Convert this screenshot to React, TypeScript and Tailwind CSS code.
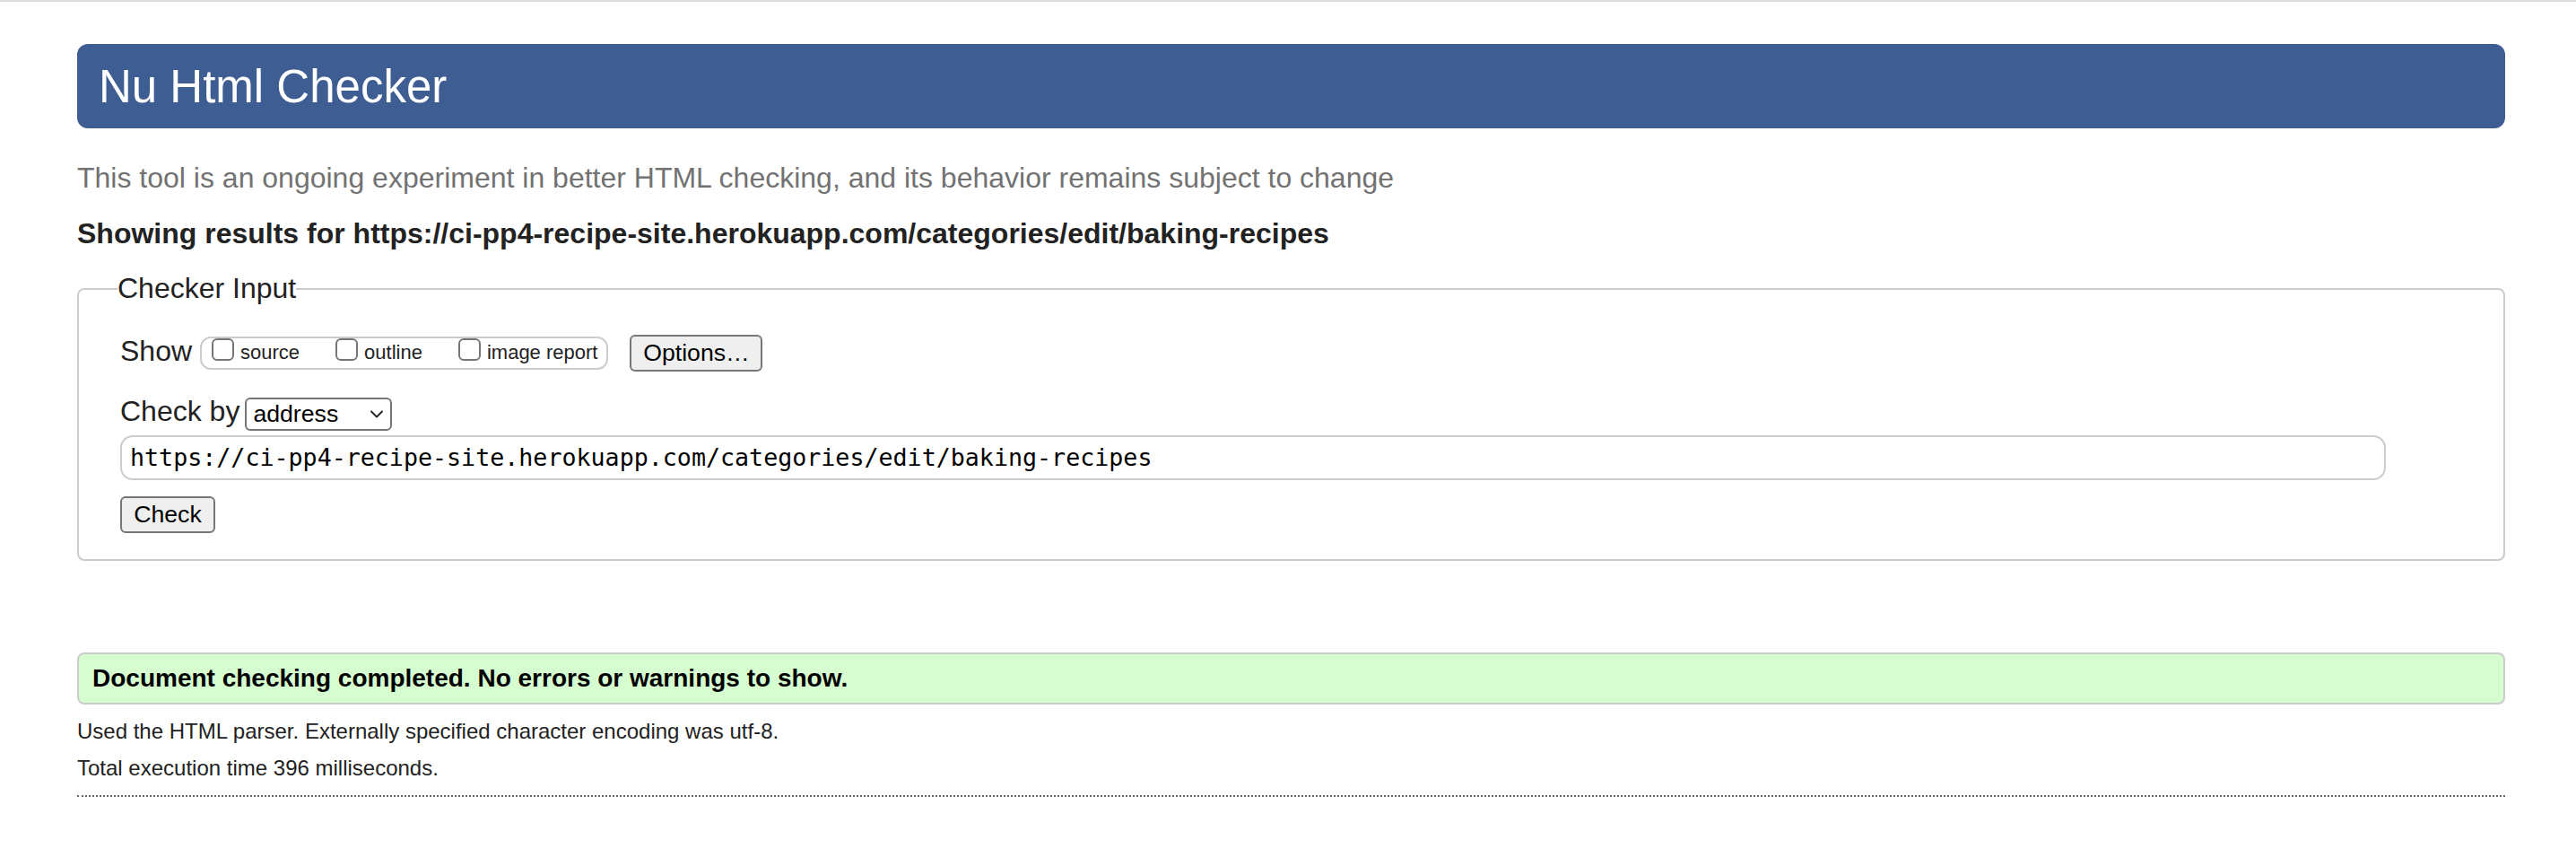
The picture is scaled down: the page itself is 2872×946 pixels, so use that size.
import React from "react";

const sans = { fontFamily: '"Liberation Sans", Arial, Helvetica, sans-serif' };

const showOptions = [
  { id: "source", label: "source" },
  { id: "outline", label: "outline" },
  { id: "image", label: "image report" },
];

function ChevronDown() {
  return (
    <svg width="14" height="9" viewBox="0 0 14 9" fill="none" stroke="#222" strokeWidth="1.8" strokeLinecap="round" strokeLinejoin="round">
      <path d="M1 1.5 L7 7.5 L13 1.5" />
    </svg>
  );
}

export default function App() {
  return (
    <div className="min-h-[946px] bg-white border-t-2 border-[#dcdcdc] text-[#222]" style={sans}>
      <div className="pl-[86px] pr-[79px]">
        <h1 className="mt-[47px] h-[94px] rounded-[12px] bg-[#3e5d92] pl-[24px] flex items-center text-[51px] font-normal text-white leading-none">
          Nu Html Checker
        </h1>

        <p className="mt-[37px] text-[32px] leading-[37px] text-[#727272]">
          This tool is an ongoing experiment in better HTML checking, and its behavior remains subject to change
        </p>

        <p className="mt-[25px] text-[32px] leading-[37px] font-bold text-[#222]">
          Showing results for https://ci-pp4-recipe-site.herokuapp.com/categories/edit/baking-recipes
        </p>

        <fieldset className="mt-[24px] border-2 border-[#cccccc] rounded-[8px] pl-[46px] pt-[33px] pb-[29px]">
          <legend className="-ml-[3px] text-[32px] leading-[37px] text-[#222]">Checker Input</legend>

          <div className="flex items-start h-[41px]">
            <span className="text-[32px] leading-[36px]">Show</span>
            <div className="ml-[9px] mt-[2px] h-[37px] rounded-[12px] border-2 border-[#cccccc] pl-[11px] pr-[10px] flex items-start gap-[40px]">
              {showOptions.map((o) => (
                <label key={o.id} className="flex items-start gap-[7px]">
                  <input
                    type="checkbox"
                    className="appearance-none m-0 w-[25px] h-[25px] border-2 border-[#767676] rounded-[6px] bg-white"
                  />
                  <span className="text-[22px] leading-[22px] mt-[5px] text-[#222]">{o.label}</span>
                </label>
              ))}
            </div>
            <button className="ml-[24px] w-[148px] h-[41px] bg-[#efefef] border-2 border-[#767676] rounded-[6px] text-[26.67px] leading-none text-black">
              Options…
            </button>
          </div>

          <div className="mt-[29px] flex items-start h-[37px]">
            <span className="text-[32px] leading-[30px]">Check by</span>
            <div className="ml-[6px] w-[164px] h-[37px] border-2 border-[#767676] rounded-[6px] bg-white flex items-center justify-between pl-[7px] pr-[8px]">
              <span className="text-[26.67px] leading-none text-black">address</span>
              <ChevronDown />
            </div>
          </div>

          <div className="mt-[5px] w-[2526px] h-[50px] border-2 border-[#cccccc] rounded-[14px] flex items-center pl-[9px]">
            <span className="text-[26.67px] leading-none text-black" style={{ fontFamily: '"DejaVu Sans Mono", "Liberation Mono", monospace' }}>
              https://ci-pp4-recipe-site.herokuapp.com/categories/edit/baking-recipes
            </span>
          </div>

          <button className="mt-[18px] w-[106px] h-[41px] bg-[#efefef] border-2 border-[#767676] rounded-[6px] text-[26.67px] leading-none text-black">
            Check
          </button>
        </fieldset>

        <div className="mt-[102px] h-[58px] border-2 border-[#cccccc] rounded-[8px] bg-[#d6fdd0] pl-[15px] flex items-center">
          <span className="text-[28px] font-bold leading-none text-black">
            Document checking completed. No errors or warnings to show.
          </span>
        </div>

        <p className="mt-[16px] text-[24px] leading-[28px] text-[#222]">
          Used the HTML parser. Externally specified character encoding was utf-8.
        </p>
        <p className="mt-[13px] text-[24px] leading-[28px] text-[#222]">
          Total execution time 396 milliseconds.
        </p>

        <div className="mt-[16px] border-t-2 border-dotted border-[#666666]" />
      </div>
    </div>
  );
}
